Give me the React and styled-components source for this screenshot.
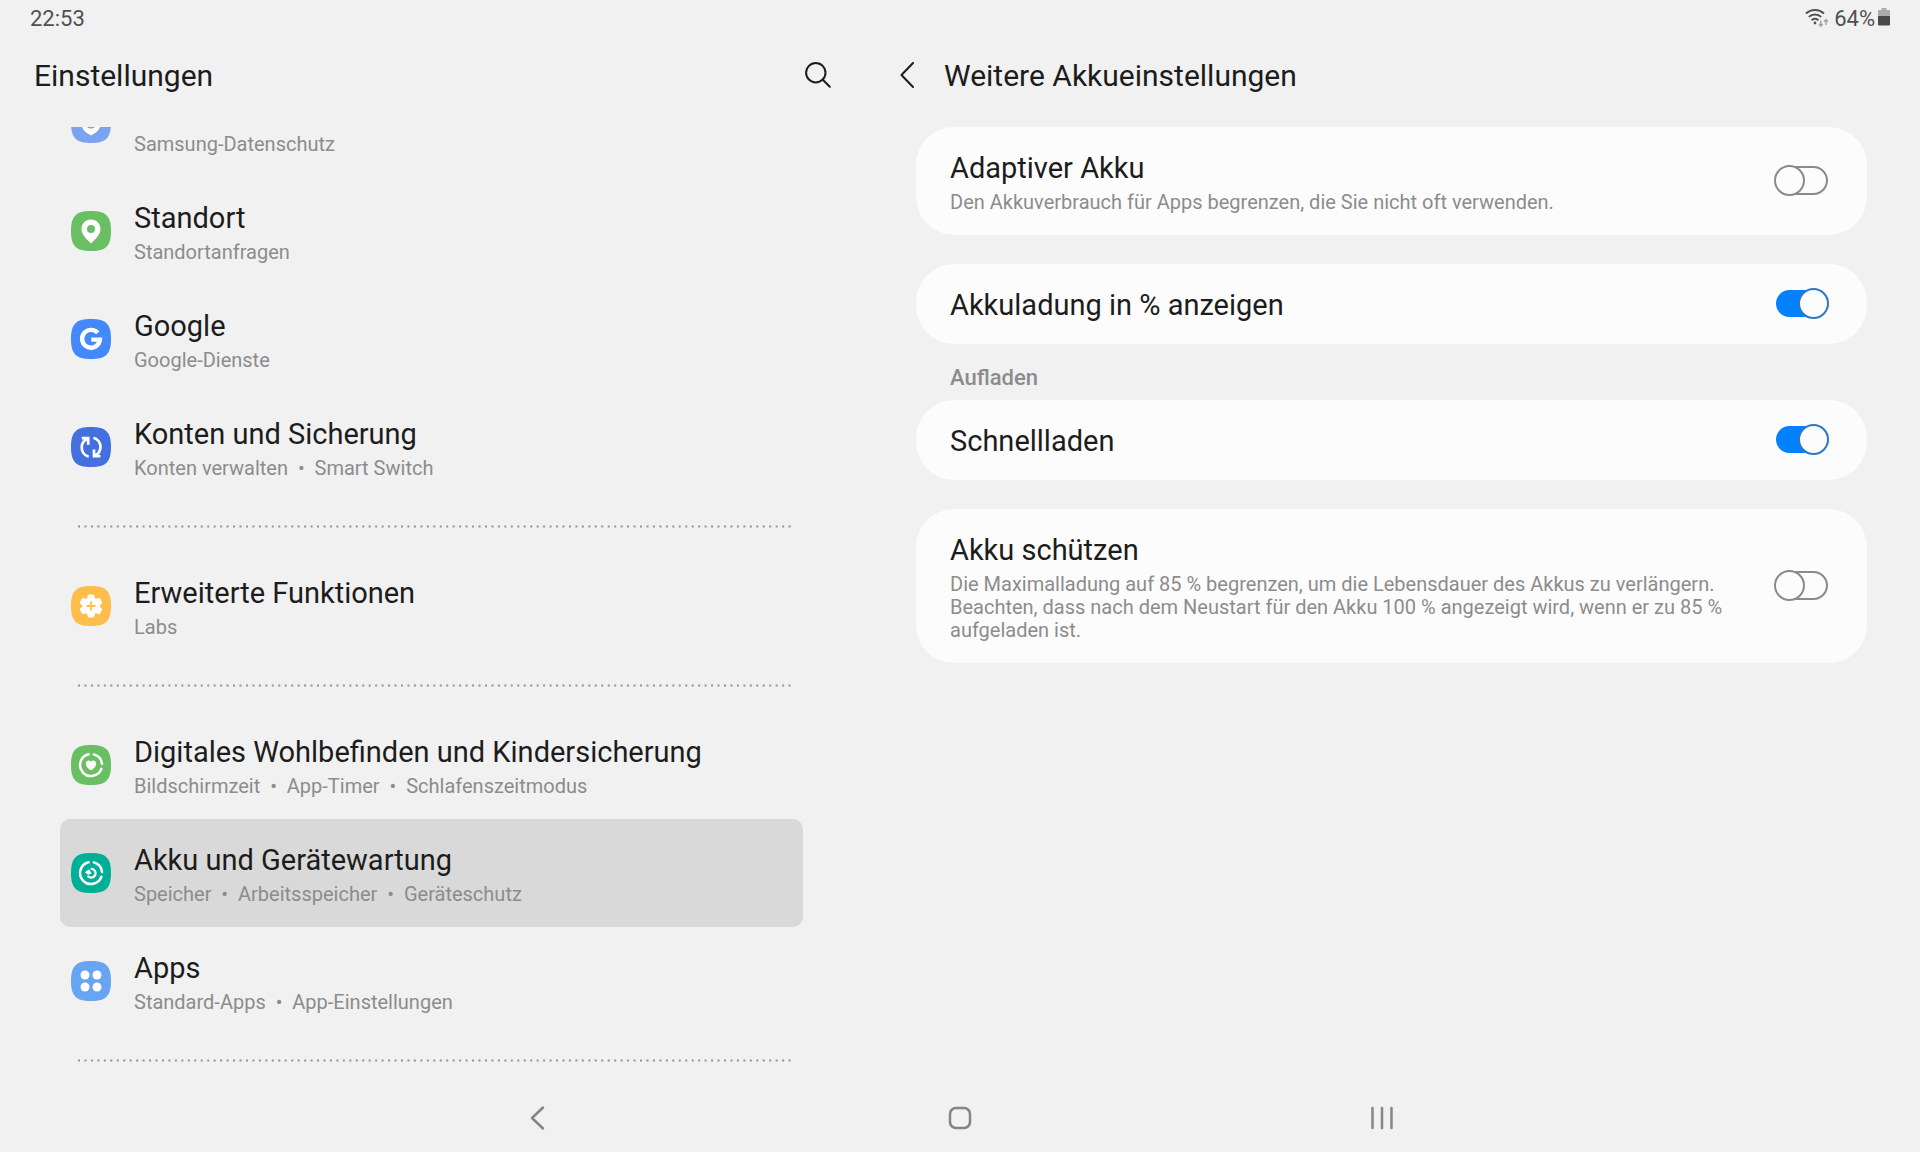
import React, { useLayoutEffect, useRef, useState } from 'react'
import styled, { createGlobalStyle } from 'styled-components'

const GlobalStyle = createGlobalStyle`
  * {
    box-sizing: border-box;
  }

  body {
    margin: 0;
    background-color: #f1f1f1;
    color: #1c1c1c;
    font-family: Roboto, 'Noto Sans', sans-serif;
  }
`

const Screen = styled.div`
  display: flex;
  flex-direction: column;
  height: 100vh;
`

const StatusBar = styled.div`
  display: flex;
  align-items: center;
  justify-content: space-between;
  height: 36px;
  padding: 0 30px;
  color: #505050;
  font-size: 22px;
`

const StatusIcons = styled.div`
  display: flex;
  align-items: center;
  gap: 3px;
`

const WifiIcon = styled.svg`
  width: 24px;
  height: 20px;
  margin-right: 2px;
`

const BatteryIcon = styled.svg`
  width: 12px;
  height: 20px;
`

const Panels = styled.div`
  display: flex;
  flex: 1;
  min-height: 0;
`

const Sidebar = styled.div`
  display: flex;
  flex: 45;
  flex-direction: column;
  min-width: 0;
`

const Detail = styled.main`
  flex: 55;
  min-width: 0;
  overflow-y: auto;
`

const PanelHeader = styled.header`
  display: flex;
  flex-shrink: 0;
  align-items: center;
  gap: 12px;
  height: 91px;
  padding: ${({ $inset }) => $inset};
  padding-bottom: 11px;
`

const PanelTitle = styled.h1`
  flex: 1;
  margin: 0;
  font-size: 30px;
  font-weight: 400;
  line-height: 36px;
`

const IconButton = styled.button`
  display: flex;
  align-items: center;
  justify-content: center;
  width: 48px;
  height: 48px;
  padding: 0;
  border: 0;
  background: none;
  color: ${({ $muted }) => ($muted ? '#858585' : '#1c1c1c')};

  svg {
    width: 28px;
    height: 28px;
    fill: none;
    stroke: currentColor;
    stroke-width: ${({ $muted }) => ($muted ? 2.5 : 2)};
    stroke-linecap: round;
    stroke-linejoin: round;
  }
`

const List = styled.nav`
  flex: 1;
  min-height: 0;
  padding: 0 61px 32px 60px;
  overflow-y: auto;
  scrollbar-width: none;
`

const Row = styled.a`
  display: flex;
  align-items: center;
  gap: 23px;
  padding: 0 11px;
  border-radius: 10px;
  background-color: ${({ $active }) => ($active ? '#d9d9d9' : 'transparent')};
  color: inherit;
  text-decoration: none;
`

const RowText = styled.div`
  padding: 23px 0 21px;
`

const Tile = styled.svg`
  flex-shrink: 0;
  width: 40px;
  height: 40px;
`

const Title = styled.div`
  min-height: 36px;
  font-size: 29px;
  line-height: 36px;
`

const Summary = styled.div`
  margin-top: 5px;
  color: #8c8c8c;
  font-size: 20px;
  line-height: 23px;
  white-space: ${({ $wrap }) => ($wrap ? 'normal' : 'pre')};
`

const Divider = styled.svg`
  display: block;
  width: calc(100% - 30px);
  height: 3px;
  margin: 24px 12px 24px 18px;
`

const Cards = styled.div`
  display: flex;
  flex-direction: column;
  gap: 29px;
  padding: 0 53px 32px 52px;
`

const Card = styled.label`
  display: flex;
  align-items: center;
  justify-content: space-between;
  gap: 28px;
  padding: 23px 38px 21px 34px;
  border-radius: 38px;
  background-color: #fcfcfc;
`

const SectionLabel = styled.h2`
  height: 56px;
  margin: 0;
  padding: 21px 34px 0;
  color: #8c8c8c;
  font-size: 22px;
  font-weight: 500;
  line-height: 25px;
`

const Switch = styled.input`
  position: relative;
  flex-shrink: 0;
  width: 55px;
  height: 31px;
  margin: 0 0 3px;
  appearance: none;

  &::before,
  &::after {
    content: '';
    position: absolute;
    box-sizing: border-box;
  }

  &::before {
    inset: 1px 1px 1px 2px;
    border: 2px solid #8a8a8a;
    border-radius: 15px;
  }

  &::after {
    top: 0;
    left: 0;
    width: 31px;
    height: 31px;
    border: 2px solid #8a8a8a;
    border-radius: 50%;
    background-color: #fcfcfc;
  }

  &:checked::before {
    inset: 2px 1px 2px 2px;
    border: 0;
    background-color: #0381fe;
  }

  &:checked::after {
    left: 24px;
    border-color: #2b78c8;
  }
`

const NavBar = styled.div`
  display: grid;
  grid-template-columns: repeat(3, 22%);
  flex-shrink: 0;
  justify-content: center;
  justify-items: center;
  align-items: center;
  height: 68px;
`

const SQUIRCLE = 'M0 20C0 5 5 0 20 0S40 5 40 20 35 40 20 40 0 35 0 20Z'

const glyphs = {
  privacy: (
    <path
      fill="#fff"
      fillRule="evenodd"
      d="M20 7.5 29.700 11v9c0 6-4.200 10-9.700 12.400C14.500 30 10.300 26 10.300 20v-9ZM20 14a5.800 5.800 0 1 0 0 11.600A5.800 5.800 0 0 0 20 14Z"
    />
  ),
  location: (
    <path
      fill="#fff"
      fillRule="evenodd"
      d="M20 8.600c-5.400 0-9.500 4.200-9.500 9.400 0 6 5.600 10.200 8.400 13.600.7.800 1.500.8 2.200 0 2.800-3.400 8.400-7.600 8.400-13.600 0-5.200-4.100-9.400-9.500-9.400Zm0 5.400a4 4 0 1 0 0 8 4 4 0 0 0 0-8Z"
    />
  ),
  google: (
    <path
      fill="none"
      stroke="#fff"
      strokeWidth="4.400"
      d="M26.700 13.900A8.900 8.900 0 1 0 28.900 20.600H20.300"
    />
  ),
  accounts: (
    <g fill="none" stroke="#fff" strokeWidth="2.700">
      <path d="M10.800 11.200h6.400v6.600M17 11.600c-4 1.700-6.300 4.900-6.300 8.800 0 4.200 2.700 8 7 9.300" />
      <path d="M29.400 29.200H23v-6.600M23.200 28.800c4-1.700 6.300-4.900 6.300-8.800 0-4.200-2.700-8-7-9.300" />
    </g>
  ),
  advanced: (
    <>
      <circle cx="20" cy="20" r="8.800" fill="#fff" />
      {[0, 60, 120].map((angle) => (
        <rect
          key={angle}
          x="16.400"
          y="8.400"
          width="7.200"
          height="23.200"
          rx="2.200"
          fill="#fff"
          transform={`rotate(${angle} 20 20)`}
        />
      ))}
      <path d="M20 15.500v9M15.500 20h9" stroke="#ffbd4c" strokeWidth="1.800" />
    </>
  ),
  wellbeing: (
    <>
      <path
        fill="none"
        stroke="#fff"
        strokeWidth="2.500"
        strokeLinecap="round"
        d="M22.800 9.400A11 11 0 0 1 31 19M30.400 23.800A11 11 0 1 1 17.600 9.300"
      />
      <path
        fill="#fff"
        d="M20 25.600c-2.800-2-5.200-4-5.200-6.800 0-3.400 3.800-4.400 5.200-1.800 1.400-2.600 5.200-1.600 5.200 1.800 0 2.800-2.400 4.800-5.200 6.800Z"
      />
    </>
  ),
  care: (
    <>
      <path
        fill="none"
        stroke="#fff"
        strokeWidth="2.500"
        strokeLinecap="round"
        d="M22.800 9.400A11 11 0 0 1 31 19M30.400 23.800A11 11 0 1 1 17.600 9.300"
      />
      <path
        fill="none"
        stroke="#fff"
        strokeWidth="2.200"
        strokeLinecap="round"
        d="M20.600 15.800A4.400 4.400 0 1 1 17.200 23.400"
      />
      <path fill="#fff" d="M13.900 19.200 18 16.200 20.800 20.400 17 21.700Z" />
    </>
  ),
  apps: (
    <g fill="#fff">
      <circle cx="14" cy="14" r="4.500" />
      <circle cx="26" cy="14" r="4.500" />
      <circle cx="14" cy="26" r="4.500" />
      <circle cx="26" cy="26" r="4.500" />
    </g>
  ),
}

const groups = [
  [
    {
      icon: 'privacy',
      color: '#7ba3ee',
      summary: ['Samsung-Datenschutz'],
    },
    {
      icon: 'location',
      color: '#6abf62',
      title: 'Standort',
      summary: ['Standortanfragen'],
    },
    {
      icon: 'google',
      color: '#4389fb',
      title: 'Google',
      summary: ['Google-Dienste'],
    },
    {
      icon: 'accounts',
      color: '#4470df',
      title: 'Konten und Sicherung',
      summary: ['Konten verwalten', 'Smart Switch'],
    },
  ],
  [
    {
      icon: 'advanced',
      color: '#ffbd4c',
      title: 'Erweiterte Funktionen',
      summary: ['Labs'],
    },
  ],
  [
    {
      icon: 'wellbeing',
      color: '#6abf62',
      title: 'Digitales Wohlbefinden und Kindersicherung',
      summary: ['Bildschirmzeit', 'App-Timer', 'Schlafenszeitmodus'],
    },
    {
      icon: 'care',
      color: '#00b096',
      title: 'Akku und Gerätewartung',
      summary: ['Speicher', 'Arbeitsspeicher', 'Geräteschutz'],
      active: true,
    },
    {
      icon: 'apps',
      color: '#67a4f1',
      title: 'Apps',
      summary: ['Standard-Apps', 'App-Einstellungen'],
    },
  ],
]

const SettingsRow = ({ icon, color, title, summary, active }) => (
  <Row href="#" $active={active} aria-current={active ? 'page' : undefined}>
    <Tile viewBox="0 0 40 40" aria-hidden="true">
      <path d={SQUIRCLE} fill={color} />
      {glyphs[icon]}
    </Tile>
    <RowText>
      <Title>{title}</Title>
      <Summary>{summary.join('  •  ')}</Summary>
    </RowText>
  </Row>
)

const DottedLine = () => (
  <Divider aria-hidden="true">
    <line
      x1="0"
      y1="1.500"
      x2="100%"
      y2="1.500"
      stroke="#949494"
      strokeWidth="2"
      strokeDasharray="2 4.460"
    />
  </Divider>
)

const SettingCard = ({ title, summary, defaultOn = false }) => {
  const [on, setOn] = useState(defaultOn)

  return (
    <Card>
      <div>
        <Title>{title}</Title>
        {summary && <Summary $wrap>{summary}</Summary>}
      </div>
      <Switch
        type="checkbox"
        role="switch"
        checked={on}
        onChange={(e) => setOn(e.target.checked)}
      />
    </Card>
  )
}

const App = () => {
  const listRef = useRef(null)

  useLayoutEffect(() => {
    listRef.current.scrollTop = 58
  }, [])

  return (
    <>
      <GlobalStyle />
      <Screen>
        <StatusBar>
          <span>22:53</span>
          <StatusIcons>
            <WifiIcon viewBox="0 0 24 20" aria-hidden="true">
              <g fill="none" stroke="#505050" strokeWidth="2">
                <path d="M1 5.500a13 13 0 0 1 18 0" />
                <path d="M3.800 8.900a9 9 0 0 1 12.400 0" />
                <path d="M6.600 12.200a5 5 0 0 1 6.800 0" />
              </g>
              <circle cx="10" cy="15" r="1.400" fill="#505050" />
              <g fill="none" stroke="#a3a3a3" strokeWidth="1.400">
                <path d="M15.800 12.500v5.500M13.900 16l1.900 2.200 1.900-2.200" />
                <path d="M21 17v-5.500M19.100 13.700 21 11.500l1.900 2.200" />
              </g>
            </WifiIcon>
            <span>64%</span>
            <BatteryIcon viewBox="0 0 12 20" aria-hidden="true">
              <path fill="#ababab" d="M3.500 0h5v2H12v6H0V2h3.500z" />
              <path fill="#4a4a4a" d="M0 8h12v8.500a1 1 0 0 1-1 1H1a1 1 0 0 1-1-1z" />
            </BatteryIcon>
          </StatusIcons>
        </StatusBar>
        <Panels>
          <Sidebar>
            <PanelHeader $inset="0 22px 0 34px">
              <PanelTitle>Einstellungen</PanelTitle>
              <IconButton type="button" aria-label="Suchen">
                <svg viewBox="0 0 28 28">
                  <circle cx="11.800" cy="10.700" r="9.700" />
                  <path d="M18.800 17.700 25.800 24.700" />
                </svg>
              </IconButton>
            </PanelHeader>
            <List ref={listRef}>
              {groups.map((rows) => (
                <React.Fragment key={rows[0].icon}>
                  {rows.map((row) => (
                    <SettingsRow key={row.icon} {...row} />
                  ))}
                  <DottedLine />
                </React.Fragment>
              ))}
            </List>
          </Sidebar>
          <Detail>
            <PanelHeader $inset="0 52px 0 20px">
              <IconButton type="button" aria-label="Zurück">
                <svg viewBox="0 0 28 28">
                  <path d="M19 1 7.500 13 19 25" />
                </svg>
              </IconButton>
              <PanelTitle>Weitere Akkueinstellungen</PanelTitle>
            </PanelHeader>
            <Cards>
              <SettingCard
                title="Adaptiver Akku"
                summary="Den Akkuverbrauch für Apps begrenzen, die Sie nicht oft verwenden."
              />
              <div>
                <SettingCard title="Akkuladung in % anzeigen" defaultOn />
                <SectionLabel>Aufladen</SectionLabel>
                <SettingCard title="Schnellladen" defaultOn />
              </div>
              <SettingCard
                title="Akku schützen"
                summary="Die Maximalladung auf 85 % begrenzen, um die Lebensdauer des Akkus zu verlängern. Beachten, dass nach dem Neustart für den Akku 100 % angezeigt wird, wenn er zu 85 % aufgeladen ist."
              />
            </Cards>
          </Detail>
        </Panels>
        <NavBar>
          <IconButton type="button" $muted aria-label="Zurück">
            <svg viewBox="0 0 28 28">
              <path d="M19 3.500 8 14 19 24.500" />
            </svg>
          </IconButton>
          <IconButton type="button" $muted aria-label="Startseite">
            <svg viewBox="0 0 28 28">
              <rect x="4" y="4" width="20" height="20" rx="6" />
            </svg>
          </IconButton>
          <IconButton type="button" $muted aria-label="Letzte Apps">
            <svg viewBox="0 0 28 28">
              <path d="M4.500 4v20M14 4v20M23.500 4v20" />
            </svg>
          </IconButton>
        </NavBar>
      </Screen>
    </>
  )
}

export default App
